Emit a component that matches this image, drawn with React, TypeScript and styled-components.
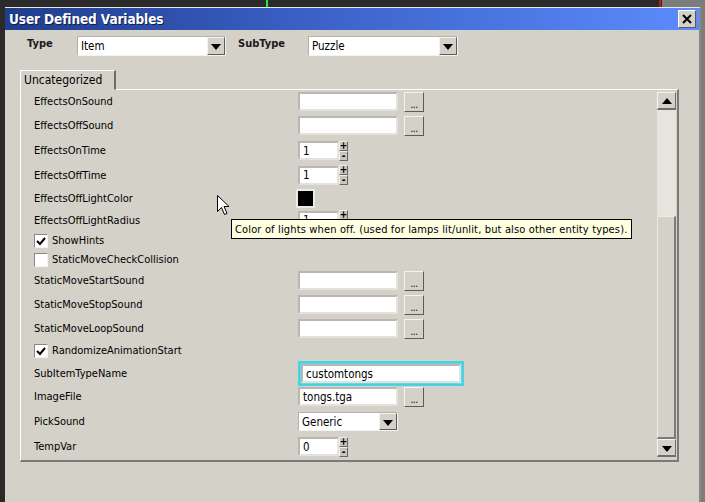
import styled, { createGlobalStyle } from "styled-components";

const GlobalStyle = createGlobalStyle`
  html, body {
    margin: 0;
    padding: 0;
    background: #2a2a2a;
    overflow: hidden;
  }
  body {
    font-family: "DejaVu Sans Condensed", "DejaVu Sans", sans-serif;
    font-size: 11px;
    color: #000;
  }
`;

type Row =
  | { kind: "file"; label: string; h: number; value?: string }
  | { kind: "spin"; label: string; h: number; value: string }
  | { kind: "color"; label: string; h: number }
  | { kind: "check"; label: string; h: number; checked: boolean }
  | { kind: "focus"; label: string; h: number; value: string }
  | { kind: "select"; label: string; h: number; value: string };

const rows: Row[] = [
  { kind: "file", label: "EffectsOnSound", h: 23 },
  { kind: "file", label: "EffectsOffSound", h: 25 },
  { kind: "spin", label: "EffectsOnTime", h: 25, value: "1" },
  { kind: "spin", label: "EffectsOffTime", h: 24, value: "1" },
  { kind: "color", label: "EffectsOffLightColor", h: 22 },
  { kind: "spin", label: "EffectsOffLightRadius", h: 22, value: "1" },
  { kind: "check", label: "ShowHints", h: 19, checked: true },
  { kind: "check", label: "StaticMoveCheckCollision", h: 19, checked: false },
  { kind: "file", label: "StaticMoveStartSound", h: 23 },
  { kind: "file", label: "StaticMoveStopSound", h: 25 },
  { kind: "file", label: "StaticMoveLoopSound", h: 23 },
  { kind: "check", label: "RandomizeAnimationStart", h: 21, checked: true },
  { kind: "focus", label: "SubItemTypeName", h: 23, value: "customtongs" },
  { kind: "file", label: "ImageFile", h: 25, value: "tongs.tga" },
  { kind: "select", label: "PickSound", h: 25, value: "Generic" },
  { kind: "spin", label: "TempVar", h: 25, value: "0" },
];

export default function App() {
  return (
    <>
      <GlobalStyle />
      <Screen>
        <Streak $x={266} $color="#2fe04a" />
        <Streak $x={659} $color="#c41818" />
        <Dialog>
          <TitleBar>
            <Title>User Defined Variables</Title>
            <CloseButton>
              <svg width="10" height="10" viewBox="0 0 10 10">
                <path d="M1 1 L9 9 M9 1 L1 9" stroke="#000" strokeWidth="2" />
              </svg>
            </CloseButton>
          </TitleBar>

          <TypeRow>
            <TypeLabel $w={50}>Type</TypeLabel>
            <Combo $w={149}>
              <ComboText>Item</ComboText>
              <ArrowButton>
                <DownArrow />
              </ArrowButton>
            </Combo>
            <TypeLabel $w={70} $gap={12}>SubType</TypeLabel>
            <Combo $w={150}>
              <ComboText>Puzzle</ComboText>
              <ArrowButton>
                <DownArrow />
              </ArrowButton>
            </Combo>
          </TypeRow>

          <TabStrip>
            <Tab>Uncategorized</Tab>
          </TabStrip>

          <Panel>
            <List>
              {rows.map((r) => (
                <PropRow key={r.label} $h={r.h}>
                  {r.kind === "check" ? (
                    <CheckLine>
                      <CheckBox>
                        {r.checked && (
                          <svg width="10" height="10" viewBox="0 0 10 10">
                            <path d="M1 5 L4 8 L9 2" stroke="#000" strokeWidth="2" fill="none" />
                          </svg>
                        )}
                      </CheckBox>
                      {r.label}
                    </CheckLine>
                  ) : (
                    <>
                      <Label>{r.label}</Label>
                      <Control r={r} />
                    </>
                  )}
                </PropRow>
              ))}
            </List>
            <ScrollBar>
              <ScrollButton>
                <UpArrow />
              </ScrollButton>
              <Track />
              <Thumb />
              <ScrollButton>
                <DownArrow />
              </ScrollButton>
            </ScrollBar>
          </Panel>
        </Dialog>

        <Tooltip>Color of lights when off. (used for lamps lit/unlit, but also other entity types).</Tooltip>
        <Cursor width="13" height="21" viewBox="0 0 13 21">
          <path d="M0.5 0.5 L0.5 16.5 L4.5 12.5 L7.5 19.5 L10 18.5 L7 11.5 L12 11.5 Z" fill="#fff" stroke="#000" strokeWidth="1" />
        </Cursor>
      </Screen>
    </>
  );
}

function Control({ r }: { r: Row }) {
  switch (r.kind) {
    case "file":
      return (
        <Controls>
          <Field $w={100}>{r.value}</Field>
          <DotsButton>...</DotsButton>
        </Controls>
      );
    case "spin":
      return (
        <Controls $gap={0}>
          <Field $w={41}>{r.value}</Field>
          <SpinCol>
            <SpinButton>+</SpinButton>
            <SpinButton>-</SpinButton>
          </SpinCol>
        </Controls>
      );
    case "color":
      return (
        <Controls>
          <Swatch />
        </Controls>
      );
    case "focus":
      return (
        <Controls>
          <FocusRing>
            <Field $w={160}>{r.value}</Field>
          </FocusRing>
        </Controls>
      );
    case "select":
      return (
        <Controls>
          <Combo $w={100} $h={19}>
            <ComboText>{r.value}</ComboText>
            <ArrowButton>
              <DownArrow />
            </ArrowButton>
          </Combo>
        </Controls>
      );
    default:
      return null;
  }
}

const Screen = styled.div`
  position: relative;
  width: 705px;
  height: 502px;
  box-sizing: border-box;
  padding: 7px 0 0 5px;
  background: linear-gradient(to right, #2a2a2a 662px, #7d7d7d 662px);
  display: flex;
  overflow: hidden;
`;

const Streak = styled.span<{ $x: number; $color: string }>`
  position: absolute;
  left: ${(p) => p.$x}px;
  top: 0;
  width: 2px;
  height: 7px;
  background: ${(p) => p.$color};
`;

const Dialog = styled.div`
  width: 696px;
  height: 495px;
  box-sizing: border-box;
  background: #d4d1c8;
  border-top: 1px solid #e9e7e1;
  border-right: 2px solid #8a8884;
  display: flex;
  flex-direction: column;
`;

const TitleBar = styled.div`
  height: 22px;
  display: flex;
  align-items: center;
  justify-content: space-between;
  padding: 0 3px 0 4px;
  background: linear-gradient(to right, #1f3d8c, #3c62c8 45%, #5b8cfc);
`;

const Title = styled.div`
  color: #fff;
  font-weight: bold;
  font-size: 13.5px;
  letter-spacing: -0.1px;
  text-shadow: 1px 1px 0 #10204a;
`;

const CloseButton = styled.div`
  width: 18px;
  height: 18px;
  box-sizing: border-box;
  background: #d4d1c8;
  border: 1px solid;
  border-color: #fff #5a5a5a #5a5a5a #fff;
  display: flex;
  align-items: center;
  justify-content: center;
`;

const TypeRow = styled.div`
  display: flex;
  align-items: center;
  padding: 6px 0 0 22px;
`;

const TypeLabel = styled.div<{ $w: number; $gap?: number }>`
  width: ${(p) => p.$w}px;
  margin-left: ${(p) => p.$gap ?? 0}px;
  font-weight: bold;
  font-size: 11px;
  color: #1a1a1a;
  margin-top: -6px;
`;

const Combo = styled.div<{ $w: number; $h?: number }>`
  width: ${(p) => p.$w}px;
  height: ${(p) => p.$h ?? 20}px;
  box-sizing: border-box;
  background: #fff;
  border: 1px solid;
  border-color: #b4b1aa #f4f3ef #f4f3ef #b4b1aa;
  display: flex;
  align-items: center;
  justify-content: space-between;
  padding-left: 3px;
`;

const ComboText = styled.span`
  font-size: 11.5px;
`;

const ArrowButton = styled.div`
  width: 18px;
  height: 100%;
  box-sizing: border-box;
  background: #d4d1c8;
  border: 1px solid;
  border-color: #f4f3ef #5c5b58 #5c5b58 #f4f3ef;
  display: flex;
  align-items: center;
  justify-content: center;
`;

const DownArrow = styled.span`
  width: 0;
  height: 0;
  border-left: 5px solid transparent;
  border-right: 5px solid transparent;
  border-top: 6px solid #000;
  margin-top: 2px;
`;

const UpArrow = styled.span`
  width: 0;
  height: 0;
  border-left: 5px solid transparent;
  border-right: 5px solid transparent;
  border-bottom: 6px solid #000;
`;

const TabStrip = styled.div`
  display: flex;
  padding: 14px 0 0 15px;
  position: relative;
  z-index: 1;
  margin-bottom: -1px;
`;

const Tab = styled.div`
  height: 20px;
  box-sizing: border-box;
  padding: 0 3px;
  width: 96px;
  display: flex;
  align-items: center;
  font-size: 12px;
  background: #d4d1c8;
  border: 1px solid;
  border-color: #fff #6e6d69 transparent #fff;
  border-right-width: 2px;
`;

const Panel = styled.div`
  margin: 0 20px 0 15px;
  height: 373px;
  box-sizing: border-box;
  border: 1px solid;
  border-color: #fff #7b7a76 #7b7a76 #fff;
  border-right-width: 2px;
  border-bottom-width: 2px;
  display: flex;
`;

const List = styled.div`
  flex: 1;
  padding-left: 13px;
  display: flex;
  flex-direction: column;
  overflow: hidden;
`;

const PropRow = styled.div<{ $h: number }>`
  height: ${(p) => p.$h}px;
  flex-shrink: 0;
  display: grid;
  grid-template-columns: 264px 1fr;
  align-items: center;
`;

const Label = styled.div`
  font-size: 11px;
  color: #000;
`;

const CheckLine = styled.div`
  grid-column: 1 / span 2;
  display: flex;
  align-items: center;
  gap: 4px;
  font-size: 11px;
  color: #000;
`;

const CheckBox = styled.div`
  width: 14px;
  height: 14px;
  box-sizing: border-box;
  background: #fff;
  border: 1px solid;
  border-color: #8a8884 #f4f3ef #f4f3ef #8a8884;
  display: flex;
  align-items: center;
  justify-content: center;
`;

const Controls = styled.div<{ $gap?: number }>`
  display: flex;
  align-items: center;
  gap: ${(p) => p.$gap ?? 5}px;
`;

const Field = styled.div<{ $w: number }>`
  width: ${(p) => p.$w}px;
  height: 19px;
  box-sizing: border-box;
  background: #fff;
  border: 2px solid;
  border-color: #bab7b0 #e4e2dc #e4e2dc #bab7b0;
  padding: 0 3px;
  display: flex;
  align-items: center;
  font-size: 11.5px;
`;

const DotsButton = styled.div`
  width: 20px;
  height: 20px;
  box-sizing: border-box;
  background: #d4d1c8;
  border: 1px solid;
  border-color: #f4f3ef #5c5b58 #5c5b58 #f4f3ef;
  display: flex;
  align-items: flex-end;
  justify-content: center;
  font-size: 10px;
  line-height: 12px;
  letter-spacing: -0.5px;
  margin-left: 1px;
`;

const SpinCol = styled.div`
  display: flex;
  flex-direction: column;
`;

const SpinButton = styled.div`
  width: 9px;
  height: 10px;
  box-sizing: border-box;
  background: #c8c5bd;
  border: 1px solid;
  border-color: #eeece6 #66655f #66655f #eeece6;
  display: flex;
  align-items: center;
  justify-content: center;
  font-size: 10px;
  line-height: 8px;
  font-weight: bold;
`;

const Swatch = styled.div`
  width: 19px;
  height: 19px;
  box-sizing: border-box;
  margin-left: -2px;
  background: #000;
  border: 2px solid #ecebe6;
`;

const FocusRing = styled.div`
  padding: 2px;
  border: 1px solid #4fd4e4;
  background: #5cdcea;
  box-shadow: inset 0 0 0 1px #44cfe0;
`;

const ScrollBar = styled.div`
  width: 19px;
  margin: 2px 1px 3px 0;
  display: flex;
  flex-direction: column;
`;

const ScrollButton = styled.div`
  height: 18px;
  flex-shrink: 0;
  box-sizing: border-box;
  background: #d4d1c8;
  border: 1px solid;
  border-color: #f4f3ef #6e6d69 #6e6d69 #f4f3ef;
  border-bottom-width: 2px;
  display: flex;
  align-items: center;
  justify-content: center;
`;

const Track = styled.div`
  height: 106px;
  background: #e6e4dd;
`;

const Thumb = styled.div`
  flex: 1;
  box-sizing: border-box;
  background: #d4d1c8;
  border: 1px solid;
  border-color: #ecebe6 #7b7a76 #7b7a76 #ecebe6;
  border-right-width: 2px;
  border-bottom-width: 2px;
`;

const Tooltip = styled.div`
  position: absolute;
  left: 231px;
  top: 219px;
  width: 401px;
  height: 20px;
  box-sizing: border-box;
  padding: 0 3px;
  background: #ffffe1;
  border: 1px solid #000;
  display: flex;
  align-items: center;
  white-space: nowrap;
  font-size: 11px;
  letter-spacing: 0.15px;
  z-index: 5;
`;

const Cursor = styled.svg`
  position: absolute;
  left: 217px;
  top: 195px;
  z-index: 6;
`;
